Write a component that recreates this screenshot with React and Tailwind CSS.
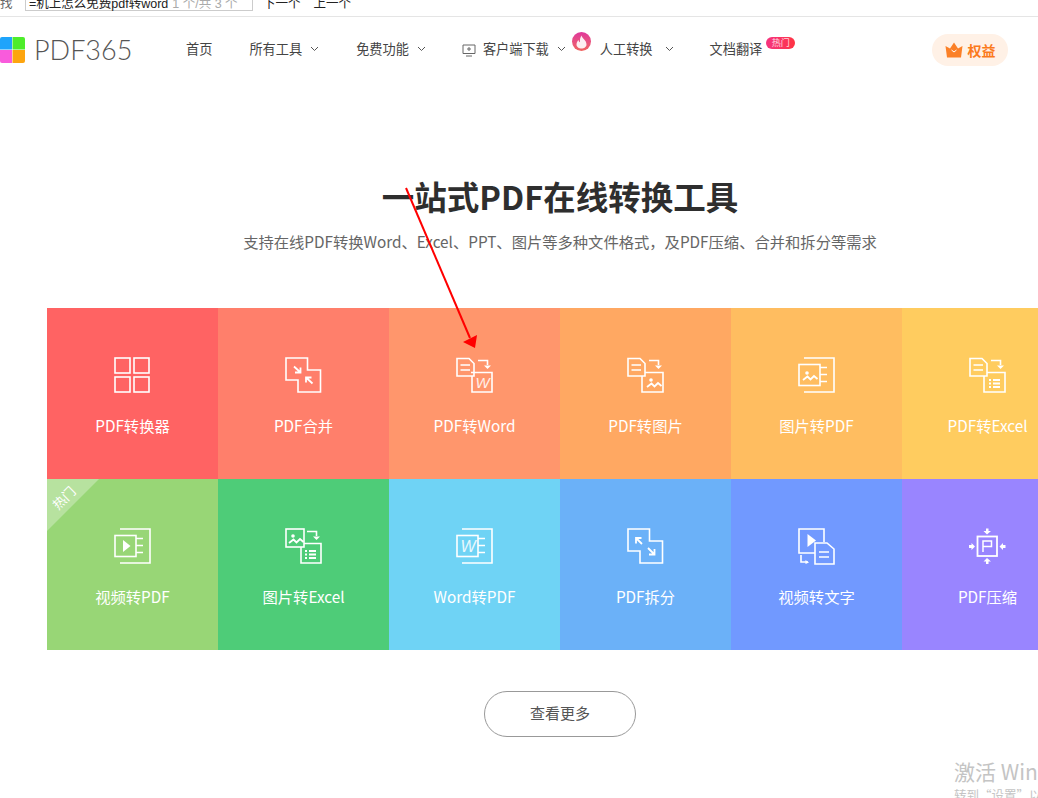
import React from "react";

const S = { fill: "none", stroke: "#fff", strokeWidth: 1.6 };
const Arrow = () => <path d="M22 3.500H31.500V8" {...S} />;
const ArrowHead = () => <path d="M28 8.500H35L31.500 12Z" fill="#fff" />;
const Doc = () => (
  <g>
    <path d="M1 1.500H13L18 6.500V19H1Z" {...S} />
    <path d="M4.500 8H14M4.500 13H14" {...S} />
  </g>
);
const Sheet = () => (
  <g>
    <path d="M6 1H36V35H6" {...S} />
    <path d="M22 10.500H29M22 17.500H29M22 24.500H29" {...S} />
  </g>
);
const Table = () => (
  <g fill="#fff">
    <rect x="20" y="22" width="2" height="2" />
    <rect x="24" y="22" width="7" height="2" />
    <rect x="20" y="25.500" width="2" height="2" />
    <rect x="24" y="25.500" width="7" height="2" />
    <rect x="20" y="29" width="2" height="2" />
    <rect x="24" y="29" width="7" height="2" />
  </g>
);
const Pic = ({ x = 0, y = 0 }) => (
  <g transform={`translate(${x} ${y})`}>
    <circle cx="6" cy="6" r="1.800" fill="#fff" />
    <path d="M2 13L6.500 9.500L9.500 12.500L13 9L16.500 12" fill="none" stroke="#fff" strokeWidth="1.800" />
  </g>
);
const W = ({ x, y, size = 15 }) => (
  <text x={x} y={y} fontSize={size} fill="#fff" fontStyle="italic" fontFamily="Liberation Sans, sans-serif" opacity="0.85">W</text>
);

const icons = {
  grid: (
    <g {...S}>
      <rect x="1" y="1" width="15" height="15" />
      <rect x="20" y="1" width="15" height="15" />
      <rect x="1" y="20" width="15" height="15" />
      <rect x="20" y="20" width="15" height="15" />
    </g>
  ),
  merge: (
    <g>
      <path d="M1 1H22.500V13H35.500V35H13V23H1Z" {...S} />
      <path d="M9 9.500L15.500 15.500M15.500 10.500V15.500H10" fill="none" stroke="#fff" strokeWidth="1.800" />
      <path d="M27.500 26.500L21 20.500M21 25.500V20.500H26.500" fill="none" stroke="#fff" strokeWidth="1.800" />
    </g>
  ),
  word: (
    <g>
      <Doc />
      <Arrow />
      <ArrowHead />
      <path d="M15 15.500H36V35H16V19" {...S} />
      <W x="19.500" y="31" size="15" />
    </g>
  ),
  toPic: (
    <g>
      <Doc />
      <Arrow />
      <ArrowHead />
      <path d="M18 15.500H36V35H15V19" {...S} />
      <Pic x="18" y="17" />
    </g>
  ),
  picPdf: (
    <g>
      <Sheet />
      <rect x="1" y="7.500" width="21" height="21" {...S} />
      <Pic x="3" y="10" />
    </g>
  ),
  excel: (
    <g>
      <Doc />
      <Arrow />
      <ArrowHead />
      <path d="M18 15.500H36V35H15V19" {...S} />
      <Table />
    </g>
  ),
  video: (
    <g>
      <Sheet />
      <rect x="1" y="7.500" width="21" height="21" {...S} />
      <path d="M9 12L16.500 18L9 24Z" fill="#fff" />
    </g>
  ),
  picExcel: (
    <g>
      <rect x="1" y="1" width="18" height="18" {...S} />
      <Pic x="2" y="2" />
      <Arrow />
      <ArrowHead />
      <path d="M19 15.500H36V35H16V19" {...S} />
      <Table />
    </g>
  ),
  wordPdf: (
    <g>
      <Sheet />
      <rect x="1" y="7.500" width="21" height="21" {...S} />
      <W x="4.500" y="24" size="16" />
    </g>
  ),
  split: (
    <g>
      <path d="M1 1H22.500V13H35.500V35H13V23H1Z" {...S} />
      <path d="M15 16L9 10M9 15.500V10H14.500" fill="none" stroke="#fff" strokeWidth="1.800" />
      <path d="M21 20L27.500 26.500M27.500 21V26.500H22" fill="none" stroke="#fff" strokeWidth="1.800" />
    </g>
  ),
  videoText: (
    <g>
      <path d="M17 25H1V1H26V14" {...S} />
      <path d="M9.500 6L18 12.500L9.500 19Z" fill="#fff" />
      <path d="M3 27V34H10" {...S} />
      <path d="M7.500 32L11 34.500L7.500 36Z" fill="#fff" />
      <path d="M17 15H29L36 21V36H17Z" {...S} />
      <path d="M21 24H31M21 29H31" {...S} />
    </g>
  ),
  compress: (
    <g>
      <rect x="8.500" y="8.500" width="19.500" height="19.500" fill="none" stroke="#fff" strokeWidth="1.800" />
      <path d="M14 24V13H22.500V18.500H14" fill="none" stroke="#fff" strokeWidth="1.500" />
      <g fill="#fff">
        <path d="M18 6.500L14.500 3H17V0.500H19.500V3H22Z" />
        <path d="M18 30L14.500 33.500H17V36H19.500V33.500H22Z" />
        <path d="M6 18.500L2.500 15V17H0V20H2.500V22Z" />
        <path d="M30.500 18.500L34 15V17H36.500V20H34V22Z" />
      </g>
    </g>
  ),
};

const row1 = [
  ["PDF转换器", "grid", "bg-[#ff6363]"],
  ["PDF合并", "merge", "bg-[#ff7f6b]"],
  ["PDF转Word", "word", "bg-[#ff966c]"],
  ["PDF转图片", "toPic", "bg-[#ffa862]"],
  ["图片转PDF", "picPdf", "bg-[#ffbd60]"],
  ["PDF转Excel", "excel", "bg-[#ffcc5f]"],
];
const row2 = [
  ["视频转PDF", "video", "bg-[#98d676]", true],
  ["图片转Excel", "picExcel", "bg-[#4ecc78]"],
  ["Word转PDF", "wordPdf", "bg-[#6fd3f5]"],
  ["PDF拆分", "split", "bg-[#6bb1f8]"],
  ["视频转文字", "videoText", "bg-[#7199ff]"],
  ["PDF压缩", "compress", "bg-[#9985ff]"],
];

function Tile({ label, icon, bg, hot }) {
  return (
    <div className={`relative w-[171px] h-[171px] shrink-0 flex flex-col items-center pt-[49px] text-white ${bg}`}>
      {hot && (
        <>
          <div className="absolute left-0 top-0 w-[52px] h-[52px] bg-white/30 [clip-path:polygon(0_0,100%_0,0_100%)]" />
          <span className="absolute left-0 top-[11px] w-[33px] text-center text-[13px] leading-[15px] -rotate-45">热门</span>
        </>
      )}
      <svg width="37" height="37" viewBox="0 0 37 37" className="block">
        {icons[icon]}
      </svg>
      <div className="mt-[21px] text-[15.300px] leading-[20px] whitespace-nowrap">{label}</div>
    </div>
  );
}

const Chev = ({ cls = "ml-[8px]" }) => (
  <svg width="9" height="6" viewBox="0 0 9 6" className={`${cls} shrink-0 -translate-y-[1px]`}>
    <path d="M1 1L4.500 4.500L8 1" fill="none" stroke="#555" strokeWidth="1" />
  </svg>
);

export default function App() {
  return (
    <div className="relative w-[1038px] h-[798px] overflow-hidden bg-white font-['Noto_Sans_CJK_SC','Noto_Sans',sans-serif]">
      {/* find bar */}
      <div className="h-[17px] border-b border-[#e5e5e5] overflow-hidden">
        <div className="flex items-center h-[14px] -mt-[3px] text-[12.500px] leading-[14px] font-['Liberation_Sans','Noto_Sans_CJK_SC',sans-serif] text-[#222] whitespace-nowrap">
          <span className="w-[25px] text-[#666]">找</span>
          <div className="w-[228px] h-[17px] -mt-[3px] pt-[2px] border border-[#ccc] px-[3px] flex items-center">
            <span>=机上怎么免费pdf转word</span>
            <span className="ml-[4px] text-[#aaa]">1 个/共 3 个</span>
          </div>
          <span className="ml-[10px]">下一个</span>
          <span className="ml-[13px]">上一个</span>
        </div>
      </div>

      {/* nav */}
      <nav className="relative h-[66px] flex items-center text-[13.200px] text-[#444] whitespace-nowrap">
        <svg width="25" height="26" viewBox="0 0 25 26" className="shrink-0">
          <path d="M0 2Q0 0 2 0H12V12.500H0Z" fill="#1ea4fb" />
          <path d="M12.500 0H23Q25 0 25 2V12.500H12.500Z" fill="#4ded2b" />
          <path d="M0 13H12V26H2Q0 26 0 24Z" fill="#f95bdc" />
          <path d="M12.500 13H25V24Q25 26 23 26H12.500Z" fill="#fda50f" />
        </svg>
        <span className="ml-[9px] w-[152px] text-[27px] leading-[30px] font-light text-[#555] font-['Lato',sans-serif]">PDF365</span>
        <span className="-translate-y-[1px]">首页</span>
        <span className="ml-[37px] -translate-y-[1px]">所有工具</span>
        <Chev />
        <span className="ml-[37px] -translate-y-[1px]">免费功能</span>
        <Chev />
        <svg width="14" height="13" viewBox="0 0 14 13" className="ml-[36px] shrink-0">
          <path d="M1 1H13V9.500H1ZM4 12H10M7 3V7M5 5H9" fill="none" stroke="#666" strokeWidth="1" />
        </svg>
        <span className="ml-[7px] -translate-y-[1px]">客户端下载</span>
        <Chev />
        <span className="relative w-[19px] h-[19px] ml-[6px] -mt-[17px] shrink-0 rounded-full bg-gradient-to-b from-[#e0359b] to-[#f0645e] flex items-center justify-center">
          <svg width="13" height="14" viewBox="0 0 13 14">
            <path d="M6.500 0.500C7 3.500 11.500 5 11.500 9.500C11.500 12 9 13.500 6.500 13.500C4 13.500 1.500 12 1.500 9.500C1.500 7.500 2.500 6 3.500 5C3.700 6.500 4.300 7 5 7.300C4.700 4.500 5.300 2.500 6.500 0.500Z" fill="#fff" opacity="0.9" />
          </svg>
        </span>
        <span className="ml-[9px] -translate-y-[1px]">人工转换</span>
        <Chev cls="ml-[12px]" />
        <span className="ml-[36px] -translate-y-[1px]">文档翻译</span>
        <span className="ml-[4px] -mt-[14px] w-[29px] h-[12px] rounded-full bg-gradient-to-r from-[#f5337f] to-[#ff3341] text-white/80 text-[9px] leading-[12px] text-center">热门</span>
        <div className="ml-auto mr-[30px] w-[76px] h-[32px] rounded-full bg-[#fff1e6] flex items-center justify-center gap-[5px] text-[14px] font-bold text-[#fb7a1c]">
          <svg width="18" height="16" viewBox="0 0 18 16">
            <path d="M0.500 4L5 6.500L9 0.500L13 6.500L17.500 4L16 15.500H2Z" fill="#fb8027" />
            <path d="M6.500 8L9 10L11.500 8" fill="none" stroke="#fff" strokeWidth="1" />
          </svg>
          <span>权益</span>
        </div>
      </nav>

      {/* hero */}
      <main className="w-[1026px] ml-[47px]">
        <h1 className="mt-[90px] h-[46px] text-center text-[32.500px] leading-[46px] font-bold text-[#2e2e2e] whitespace-nowrap">一站式PDF在线转换工具</h1>
        <p className="mt-[10px] text-center text-[15.300px] leading-[24px] text-[#666] whitespace-nowrap">支持在线PDF转换Word、Excel、PPT、图片等多种文件格式，及PDF压缩、合并和拆分等需求</p>
        <div className="mt-[55px] flex">
          {row1.map(([l, i, b]) => <Tile key={l} label={l} icon={i} bg={b} />)}
        </div>
        <div className="flex">
          {row2.map(([l, i, b, h]) => <Tile key={l} label={l} icon={i} bg={b} hot={h} />)}
        </div>
        <div className="mt-[41px] flex justify-center">
          <button className="w-[152px] h-[46px] pb-[2px] rounded-full border border-[#999] text-[15px] text-[#555]">查看更多</button>
        </div>
      </main>

      {/* annotation arrow */}
      <svg width="1038" height="798" className="absolute left-0 top-0 pointer-events-none">
        <path d="M406 188L470 338" stroke="#f00" strokeWidth="2" fill="none" />
        <path d="M475 348L463 342L477 335Z" fill="#f00" />
      </svg>

      {/* watermark */}
      <div className="absolute left-[954px] top-[757px] w-[100px] text-[#c4c4c4] whitespace-nowrap">
        <div className="text-[21px] leading-[28px]">激活 Win</div>
        <div className="text-[12.500px] leading-[18px] mt-[1px]">转到“设置”以</div>
      </div>
    </div>
  );
}
